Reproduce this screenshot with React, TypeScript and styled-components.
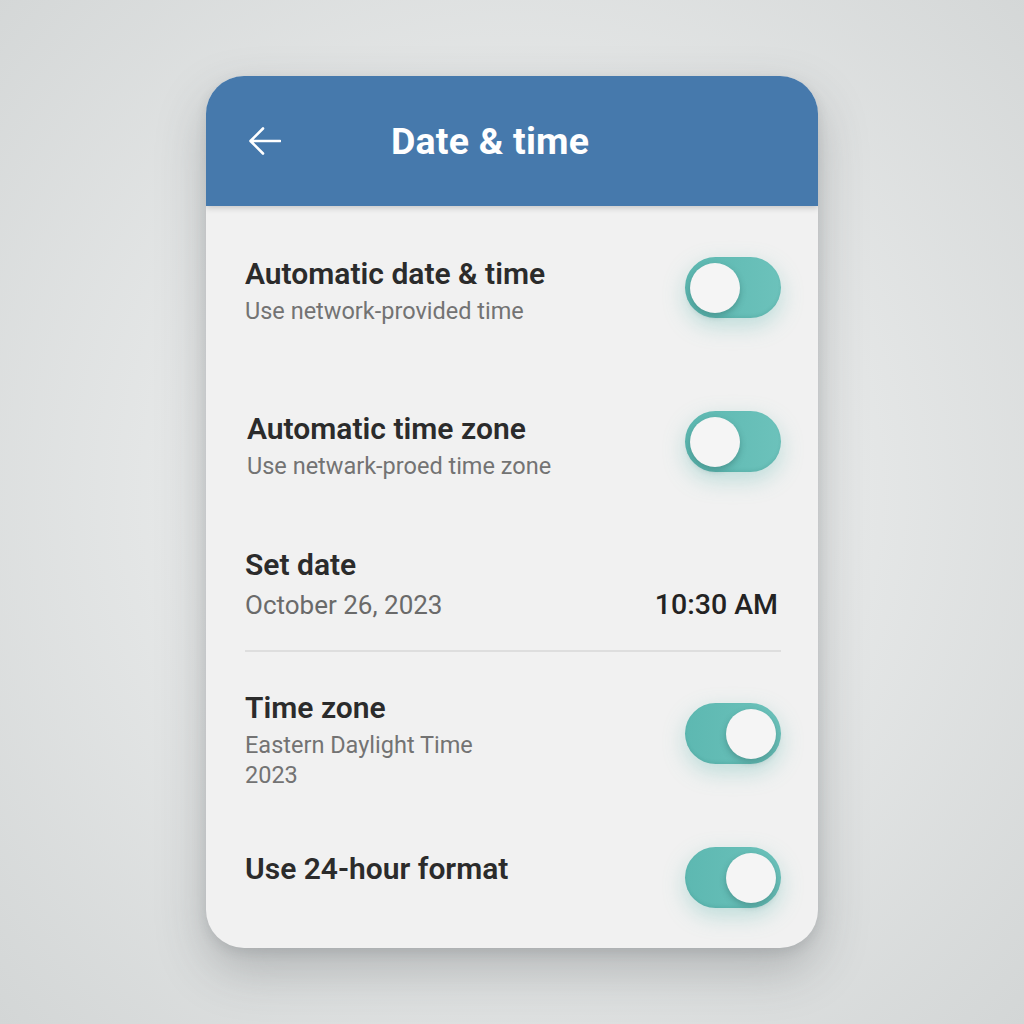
import React from 'react';
import styled, { createGlobalStyle } from 'styled-components';

const GlobalStyle = createGlobalStyle`
  html, body {
    margin: 0;
    padding: 0;
  }
  body {
    font-family: Roboto, "Noto Sans", "Liberation Sans", sans-serif;
    background: radial-gradient(ellipse at 50% 48%, #eff0f0 0%, #e6e8e8 45%, #d3d6d6 100%);
    min-height: 1024px;
  }
`;

const Page = styled.div`
  width: 1024px;
  height: 1024px;
  display: flex;
  justify-content: center;
  padding-top: 76px;
  box-sizing: border-box;
`;

const Card = styled.div`
  width: 612px;
  height: 872px;
  border-radius: 38px;
  overflow: hidden;
  background: #f1f1f1;
  box-shadow: 0 22px 50px rgba(60, 66, 70, 0.28), 0 4px 12px rgba(60, 66, 70, 0.12);
  display: flex;
  flex-direction: column;
`;

const Header = styled.div`
  height: 130px;
  flex-shrink: 0;
  background: #4679ac;
  display: flex;
  align-items: center;
  padding-left: 43px;
  gap: 110px;
  box-shadow: 0 2px 6px rgba(0, 0, 0, 0.18);
  position: relative;
  z-index: 1;
`;

const BackButton = styled.div`
  width: 32px;
  height: 28px;
  display: flex;
  align-items: center;
  color: #ffffff;
`;

const Title = styled.h1`
  margin: 0;
  font-size: 37.5px;
  font-weight: 700;
  color: #ffffff;
  letter-spacing: 0.2px;
`;

const Body = styled.div`
  flex: 1;
  padding: 0 37px 0 39px;
  display: flex;
  flex-direction: column;
`;

const Row = styled.div<{ $top: number; $indent?: number }>`
  display: flex;
  align-items: flex-start;
  justify-content: space-between;
  margin-top: ${p => p.$top}px;
  padding-left: ${p => p.$indent ?? 0}px;
`;

const TextBlock = styled.div`
  display: flex;
  flex-direction: column;
  gap: 6px;
`;

const Label = styled.div`
  font-size: 30px;
  line-height: 32px;
  font-weight: 600;
  color: #2b2b2b;
`;

const Hint = styled.div`
  font-size: 23.5px;
  line-height: 30px;
  color: #737373;
`;

const DateLine = styled.div`
  display: flex;
  justify-content: space-between;
  align-items: center;
  margin-top: 9px;
`;

const DateValue = styled.div`
  font-size: 26px;
  line-height: 30px;
  color: #6a6a6a;
`;

const TimeValue = styled.div`
  font-size: 28.5px;
  line-height: 30px;
  font-weight: 500;
  color: #232323;
  margin-right: 3px;
`;

const Divider = styled.div`
  height: 2px;
  background: #dedede;
  margin-top: 30px;
`;

const Track = styled.div<{ $on: boolean; $offset: number }>`
  width: 96px;
  height: 61px;
  border-radius: 31px;
  flex-shrink: 0;
  margin-top: ${p => p.$offset}px;
  background: linear-gradient(90deg, #5db8b1 0%, #6cc2bb 100%);
  box-shadow: 0 8px 22px rgba(92, 184, 174, 0.35), inset 0 -2px 3px rgba(40, 120, 112, 0.15);
  display: flex;
  align-items: center;
  justify-content: ${p => (p.$on ? 'flex-end' : 'flex-start')};
  padding: 0 5px;
  box-sizing: border-box;
`;

const Knob = styled.div`
  width: 50px;
  height: 50px;
  border-radius: 50%;
  background: #f5f5f5;
  box-shadow: 0 3px 6px rgba(30, 80, 76, 0.35);
`;

const Toggle: React.FC<{ on: boolean; offset: number }> = ({ on, offset }) => (
  <Track $on={on} $offset={offset}>
    <Knob />
  </Track>
);

const App: React.FC = () => (
  <>
    <GlobalStyle />
    <Page>
      <Card>
        <Header>
          <BackButton>
            <svg width="32" height="28" viewBox="0 0 32 28" fill="none">
              <path
                d="M31 14H2M14 1.5L1.5 14L14 26.5"
                stroke="currentColor"
                strokeWidth="2.6"
                strokeLinecap="round"
                strokeLinejoin="round"
              />
            </svg>
          </BackButton>
          <Title>Date &amp; time</Title>
        </Header>
        <Body>
          <Row $top={52}>
            <TextBlock>
              <Label>Automatic date &amp; time</Label>
              <Hint>Use network-provided time</Hint>
            </TextBlock>
            <Toggle on={false} offset={-1} />
          </Row>
          <Row $top={87} $indent={2}>
            <TextBlock>
              <Label>Automatic time zone</Label>
              <Hint>Use netwark-proed time zone</Hint>
            </TextBlock>
            <Toggle on={false} offset={-2} />
          </Row>
          <Row $top={68}>
            <Label>Set date</Label>
          </Row>
          <DateLine>
            <DateValue>October 26, 2023</DateValue>
            <TimeValue>10:30 AM</TimeValue>
          </DateLine>
          <Divider />
          <Row $top={40}>
            <TextBlock>
              <Label>Time zone</Label>
              <Hint>
                Eastern Daylight Time
                <br />
                2023
              </Hint>
            </TextBlock>
            <Toggle on={true} offset={11} />
          </Row>
          <Row $top={63}>
            <Label>Use 24-hour format</Label>
            <Toggle on={true} offset={-6} />
          </Row>
        </Body>
      </Card>
    </Page>
  </>
);

export default App;
